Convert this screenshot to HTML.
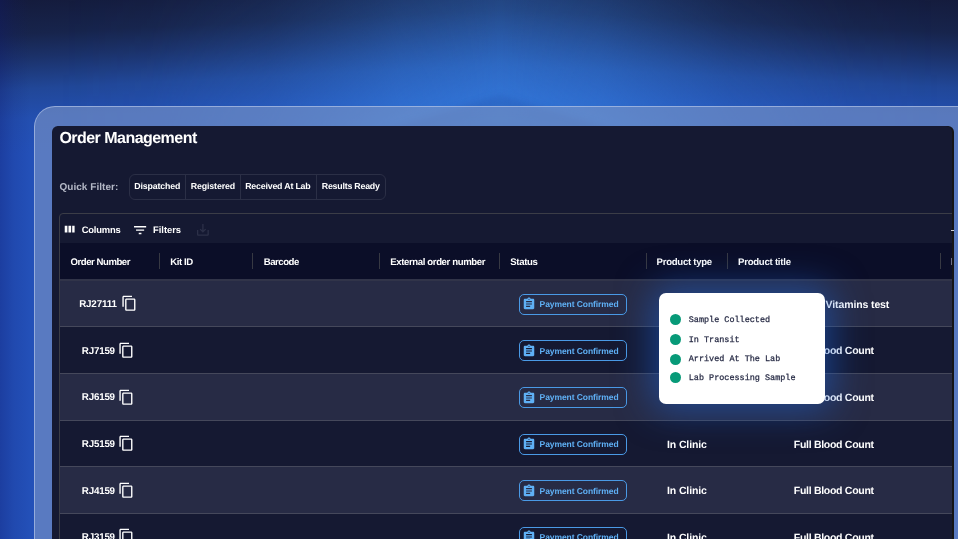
<!DOCTYPE html>
<html lang="en"><head><meta charset="utf-8"><title>Order Management</title>
<style>
*{margin:0;padding:0;box-sizing:border-box}
html,body{width:958px;height:539px;overflow:hidden;background:#2450b8}
body{position:relative;font-family:"Liberation Sans",sans-serif;font-weight:bold;text-rendering:geometricPrecision}
.bg{position:absolute;left:0;top:0;width:958px;height:539px;overflow:hidden;background:#2350b8}
.bg i{position:absolute;top:0;width:500px;height:600px}
.bg .l{left:0;background:linear-gradient(177.1deg,#141b3c 0px,#17244c 35px,#1b3169 58px,#214798 90px,#234fb0 120px,#2350b8 155px,#2350b8 700px)}
.bg .r{left:500px;background:linear-gradient(182.9deg,#141b3c 0px,#17244c 35px,#1b3169 58px,#214798 90px,#234fb0 120px,#2350b8 155px,#2350b8 700px)}
.bg .gl{left:0;background:linear-gradient(174.3deg,rgba(54,126,222,0.22) 0px,rgba(54,126,222,0.4) 50px,rgba(54,126,222,0.56) 100px,rgba(54,126,222,0.78) 148px,rgba(54,126,222,0.95) 168px,rgba(54,126,222,0.85) 260px,rgba(54,126,222,0.5) 600px);-webkit-mask-image:linear-gradient(90deg,rgba(0,0,0,0) 60px,rgba(0,0,0,0.06) 150px,rgba(0,0,0,0.32) 270px,rgba(0,0,0,0.82) 400px,rgba(0,0,0,1) 500px);mask-image:linear-gradient(90deg,rgba(0,0,0,0) 60px,rgba(0,0,0,0.06) 150px,rgba(0,0,0,0.32) 270px,rgba(0,0,0,0.82) 400px,rgba(0,0,0,1) 500px)}
.bg .gr{left:500px;background:linear-gradient(185.7deg,rgba(54,126,222,0.22) 0px,rgba(54,126,222,0.4) 50px,rgba(54,126,222,0.56) 100px,rgba(54,126,222,0.78) 148px,rgba(54,126,222,0.95) 168px,rgba(54,126,222,0.85) 260px,rgba(54,126,222,0.5) 600px);-webkit-mask-image:linear-gradient(270deg,rgba(0,0,0,0) 60px,rgba(0,0,0,0.06) 150px,rgba(0,0,0,0.32) 270px,rgba(0,0,0,0.82) 400px,rgba(0,0,0,1) 500px);mask-image:linear-gradient(270deg,rgba(0,0,0,0) 60px,rgba(0,0,0,0.06) 150px,rgba(0,0,0,0.32) 270px,rgba(0,0,0,0.82) 400px,rgba(0,0,0,1) 500px)}
.bg .e{left:0;width:40px;background:linear-gradient(90deg,rgba(14,24,110,0.32) 0,rgba(14,24,110,0.12) 14px,rgba(14,24,110,0) 30px)}
.bg .w{left:380px;top:95px;width:240px;height:36px;filter:blur(3px)}
.bg .w b{position:absolute;left:0;top:0;width:240px;height:36px;background:linear-gradient(180deg,rgba(22,48,130,0.14),rgba(22,48,130,0.24));clip-path:polygon(50% 0,100% 100%,0 100%)}
.frame{position:absolute;left:34px;top:106px;width:960px;height:500px;border-radius:21px;
 background:rgba(125,150,198,0.6);border:1px solid rgba(190,205,238,0.6)}
.panel{position:absolute;left:52px;top:126px;width:900px;height:440px;background:#151932;border-radius:6px;overflow:hidden;
 box-shadow:2px 0 0 0 #141416}
.in{will-change:transform;position:absolute;left:-52px;top:-126px;width:958px;height:539px}
.in>*{position:absolute}
.qf{left:128.8px;top:173.5px;width:257.2px;height:26.2px;border:1px solid #2b2f46;border-radius:6px}
.qf i{position:absolute;top:0;width:1px;height:24.2px;background:#2b2f46}
.table{left:59.3px;top:213px;width:900px;height:400px;border:1px solid #3b3d47;border-radius:4px 0 0 0;overflow:hidden}
.table>*{position:absolute;left:0;width:900px}
.toolbar{top:0;height:30px}
.thead{top:29px;height:38px;background:#0b0e28;border-bottom:2px solid #313449}
.row{height:46.6px;border-bottom:1px solid #45485b}
.row.odd{background:#272b45}
.sep{width:1px;height:16px;top:252.8px;background:#373943}
.ic{display:block}
.badge{left:518.8px;width:108px;height:21px;border:1px solid #4a9ae6;border-radius:5px}
.t{white-space:nowrap;line-height:1;font-weight:bold}
.card{position:absolute;left:659.2px;top:293px;width:165.4px;height:110.8px;background:#fff;border-radius:7px;
 box-shadow:0 0 36px 6px rgba(30,98,210,0.55)}
.card>*{position:absolute}
.dot{left:10.9px;width:11px;height:11px;border-radius:50%;background:#079a78}
.m{left:29.6px;font-family:"Liberation Mono",monospace;font-weight:normal;font-size:8.47px;line-height:10px;color:#272b45;white-space:nowrap;-webkit-text-stroke:0.25px #272b45}
.tick{position:absolute;left:951.4px;top:229.7px;width:2.2px;height:1.2px;background:#cfcfd4}
.clipmark{left:950.9px;top:258px;width:1.1px;height:7px;background:#6e7088}

</style></head>
<body>
<div class="bg"><i class="l"></i><i class="r"></i><i class="gl"></i><i class="gr"></i><i class="e"></i><i class="w"><b></b></i></div>
<div class="frame"></div>
<div class="panel"><div class="in">
<div class="qf"><i style="left:55.3px"></i><i style="left:110.1px"></i><i style="left:186.4px"></i></div>
<div class="table"><div class="toolbar"></div><div class="thead"></div>
<div class="row odd" style="top:66.8px"></div>
<div class="row" style="top:113.4px"></div>
<div class="row odd" style="top:160px"></div>
<div class="row" style="top:206.6px"></div>
<div class="row odd" style="top:253.2px"></div>
<div class="row" style="top:299.8px"></div>
</div>
<b class="sep" style="left:158.5px"></b><b class="sep" style="left:252.3px"></b><b class="sep" style="left:378.7px"></b><b class="sep" style="left:498.9px"></b><b class="sep" style="left:645.7px"></b><b class="sep" style="left:726.8px"></b><b class="sep" style="left:939.5px"></b>
<b class="clipmark"></b>
<svg class="ic" style="left:59.4px;top:221.4px;width:16px;height:16px" viewBox="0 0 24 24"><path fill="#fff" d="M8.6 7h4v10.2h-4zM14.2 7h4v10.2h-4zM19.8 7h3.6v10.2h-3.6z"/></svg>
<svg class="ic" style="left:131.7px;top:221.5px;width:16.2px;height:16.2px" viewBox="0 0 24 24"><path fill="#fff" d="M10 18h4v-2h-4v2zM3 6v2h18V6H3zm3 7h12v-2H6v2z"/></svg>
<svg class="ic" style="left:195px;top:221.7px;width:15.8px;height:15.8px" viewBox="0 0 24 24"><path fill="#2c3048" d="M19 12v7H5v-7H3v7c0 1.100.9 2 2 2h14c1.100 0 2-.9 2-2v-7h-2zm-6 .67l2.590-2.580L17 11.500l-5 5-5-5 1.410-1.410L11 12.670V3h2z"/></svg>
<svg class="ic" style="left:120.7px;top:295.3px;width:16.5px;height:16.5px" viewBox="0 0 24 24"><path fill="#fff" d="M16 1H4c-1.100 0-2 .9-2 2v14h2V3h12V1zm3 4H8c-1.100 0-2 .9-2 2v14c0 1.100.9 2 2 2h11c1.100 0 2-.9 2-2V7c0-1.100-.9-2-2-2zm0 16H8V7h11v14z"/></svg>
<div class="badge" style="top:293.7px"></div><svg class="ic" style="left:522.2px;top:297.3px;width:14px;height:14px" viewBox="0 0 24 24"><path fill="#5fb0f5" d="M19 3h-4.180C14.400 1.840 13.300 1 12 1c-1.300 0-2.400.84-2.820 2H5c-1.100 0-2 .9-2 2v14c0 1.100.9 2 2 2h14c1.100 0 2-.9 2-2V5c0-1.100-.9-2-2-2zm-7 0c.55 0 1 .45 1 1s-.45 1-1 1-1-.45-1-1 .45-1 1-1zm2 14H7v-2h7v2zm3-4H7v-2h10v2zm0-4H7V7h10v2z"/></svg>
<svg class="ic" style="left:118.3px;top:341.9px;width:16.5px;height:16.5px" viewBox="0 0 24 24"><path fill="#fff" d="M16 1H4c-1.100 0-2 .9-2 2v14h2V3h12V1zm3 4H8c-1.100 0-2 .9-2 2v14c0 1.100.9 2 2 2h11c1.100 0 2-.9 2-2V7c0-1.100-.9-2-2-2zm0 16H8V7h11v14z"/></svg>
<div class="badge" style="top:340.3px"></div><svg class="ic" style="left:522.2px;top:343.9px;width:14px;height:14px" viewBox="0 0 24 24"><path fill="#5fb0f5" d="M19 3h-4.180C14.400 1.840 13.300 1 12 1c-1.300 0-2.400.84-2.820 2H5c-1.100 0-2 .9-2 2v14c0 1.100.9 2 2 2h14c1.100 0 2-.9 2-2V5c0-1.100-.9-2-2-2zm-7 0c.55 0 1 .45 1 1s-.45 1-1 1-1-.45-1-1 .45-1 1-1zm2 14H7v-2h7v2zm3-4H7v-2h10v2zm0-4H7V7h10v2z"/></svg>
<svg class="ic" style="left:118.3px;top:388.5px;width:16.5px;height:16.5px" viewBox="0 0 24 24"><path fill="#fff" d="M16 1H4c-1.100 0-2 .9-2 2v14h2V3h12V1zm3 4H8c-1.100 0-2 .9-2 2v14c0 1.100.9 2 2 2h11c1.100 0 2-.9 2-2V7c0-1.100-.9-2-2-2zm0 16H8V7h11v14z"/></svg>
<div class="badge" style="top:386.9px"></div><svg class="ic" style="left:522.2px;top:390.5px;width:14px;height:14px" viewBox="0 0 24 24"><path fill="#5fb0f5" d="M19 3h-4.180C14.400 1.840 13.300 1 12 1c-1.300 0-2.400.84-2.820 2H5c-1.100 0-2 .9-2 2v14c0 1.100.9 2 2 2h14c1.100 0 2-.9 2-2V5c0-1.100-.9-2-2-2zm-7 0c.55 0 1 .45 1 1s-.45 1-1 1-1-.45-1-1 .45-1 1-1zm2 14H7v-2h7v2zm3-4H7v-2h10v2zm0-4H7V7h10v2z"/></svg>
<svg class="ic" style="left:118.3px;top:435.1px;width:16.5px;height:16.5px" viewBox="0 0 24 24"><path fill="#fff" d="M16 1H4c-1.100 0-2 .9-2 2v14h2V3h12V1zm3 4H8c-1.100 0-2 .9-2 2v14c0 1.100.9 2 2 2h11c1.100 0 2-.9 2-2V7c0-1.100-.9-2-2-2zm0 16H8V7h11v14z"/></svg>
<div class="badge" style="top:433.5px"></div><svg class="ic" style="left:522.2px;top:437.1px;width:14px;height:14px" viewBox="0 0 24 24"><path fill="#5fb0f5" d="M19 3h-4.180C14.400 1.840 13.300 1 12 1c-1.300 0-2.400.84-2.820 2H5c-1.100 0-2 .9-2 2v14c0 1.100.9 2 2 2h14c1.100 0 2-.9 2-2V5c0-1.100-.9-2-2-2zm-7 0c.55 0 1 .45 1 1s-.45 1-1 1-1-.45-1-1 .45-1 1-1zm2 14H7v-2h7v2zm3-4H7v-2h10v2zm0-4H7V7h10v2z"/></svg>
<svg class="ic" style="left:118.3px;top:481.7px;width:16.5px;height:16.5px" viewBox="0 0 24 24"><path fill="#fff" d="M16 1H4c-1.100 0-2 .9-2 2v14h2V3h12V1zm3 4H8c-1.100 0-2 .9-2 2v14c0 1.100.9 2 2 2h11c1.100 0 2-.9 2-2V7c0-1.100-.9-2-2-2zm0 16H8V7h11v14z"/></svg>
<div class="badge" style="top:480.1px"></div><svg class="ic" style="left:522.2px;top:483.7px;width:14px;height:14px" viewBox="0 0 24 24"><path fill="#5fb0f5" d="M19 3h-4.180C14.400 1.840 13.300 1 12 1c-1.300 0-2.400.84-2.820 2H5c-1.100 0-2 .9-2 2v14c0 1.100.9 2 2 2h14c1.100 0 2-.9 2-2V5c0-1.100-.9-2-2-2zm-7 0c.55 0 1 .45 1 1s-.45 1-1 1-1-.45-1-1 .45-1 1-1zm2 14H7v-2h7v2zm3-4H7v-2h10v2zm0-4H7V7h10v2z"/></svg>
<svg class="ic" style="left:118.3px;top:528.3px;width:16.5px;height:16.5px" viewBox="0 0 24 24"><path fill="#fff" d="M16 1H4c-1.100 0-2 .9-2 2v14h2V3h12V1zm3 4H8c-1.100 0-2 .9-2 2v14c0 1.100.9 2 2 2h11c1.100 0 2-.9 2-2V7c0-1.100-.9-2-2-2zm0 16H8V7h11v14z"/></svg>
<div class="badge" style="top:526.7px"></div><svg class="ic" style="left:522.2px;top:530.3px;width:14px;height:14px" viewBox="0 0 24 24"><path fill="#5fb0f5" d="M19 3h-4.180C14.400 1.840 13.300 1 12 1c-1.300 0-2.400.84-2.820 2H5c-1.100 0-2 .9-2 2v14c0 1.100.9 2 2 2h14c1.100 0 2-.9 2-2V5c0-1.100-.9-2-2-2zm-7 0c.55 0 1 .45 1 1s-.45 1-1 1-1-.45-1-1 .45-1 1-1zm2 14H7v-2h7v2zm3-4H7v-2h10v2zm0-4H7V7h10v2z"/></svg>
<span class="t" style="left:59.4px;top:130px;font-size:16px;letter-spacing:-0.53px;color:#ffffff;line-height:17px;">Order Management</span>
<span class="t" style="left:59.4px;top:182px;font-size:10px;letter-spacing:0.05px;color:#b4b8c6;line-height:11px;">Quick Filter:</span>
<span class="t" style="left:134.3px;top:181px;font-size:8.8px;letter-spacing:-0.16px;color:#ffffff;line-height:10px;">Dispatched</span>
<span class="t" style="left:190.8px;top:181px;font-size:8.8px;letter-spacing:-0.13px;color:#ffffff;line-height:10px;">Registered</span>
<span class="t" style="left:245.2px;top:181px;font-size:8.8px;letter-spacing:-0.19px;color:#ffffff;line-height:10px;">Received At Lab</span>
<span class="t" style="left:321.8px;top:181px;font-size:8.8px;letter-spacing:-0.21px;color:#ffffff;line-height:10px;">Results Ready</span>
<span class="t" style="left:81.8px;top:224px;font-size:9.4px;letter-spacing:-0.21px;color:#ffffff;line-height:11px;">Columns</span>
<span class="t" style="left:153px;top:224px;font-size:9.4px;letter-spacing:-0.02px;color:#ffffff;line-height:11px;">Filters</span>
<span class="t" style="left:70.5px;top:257px;font-size:9.6px;letter-spacing:-0.46px;color:#ffffff;line-height:11px;">Order Number</span>
<span class="t" style="left:170.2px;top:257px;font-size:9.6px;letter-spacing:-0.4px;color:#ffffff;line-height:11px;">Kit ID</span>
<span class="t" style="left:263.7px;top:257px;font-size:9.6px;letter-spacing:-0.46px;color:#ffffff;line-height:11px;">Barcode</span>
<span class="t" style="left:390.2px;top:257px;font-size:9.6px;letter-spacing:-0.38px;color:#ffffff;line-height:11px;">External order number</span>
<span class="t" style="left:510.2px;top:257px;font-size:9.6px;letter-spacing:-0.32px;color:#ffffff;line-height:11px;">Status</span>
<span class="t" style="left:656.6px;top:257px;font-size:9.6px;letter-spacing:-0.28px;color:#ffffff;line-height:11px;">Product type</span>
<span class="t" style="left:738px;top:257px;font-size:9.6px;letter-spacing:-0.25px;color:#ffffff;line-height:11px;">Product title</span>
<span class="t" style="left:79.2px;top:299px;font-size:9.8px;letter-spacing:-0.17px;color:#ffffff;line-height:11px;">RJ27111</span>
<span class="t" style="left:539.6px;top:299px;font-size:8.5px;letter-spacing:-0.08px;color:#5fb0f5;line-height:10px;">Payment Confirmed</span>
<span class="t" style="left:825.6px;top:299px;font-size:10.5px;letter-spacing:-0.12px;color:#ffffff;line-height:12px;">Vitamins test</span>
<span class="t" style="left:81.8px;top:346px;font-size:9.8px;letter-spacing:-0.21px;color:#ffffff;line-height:11px;">RJ7159</span>
<span class="t" style="left:539.6px;top:346px;font-size:8.5px;letter-spacing:-0.08px;color:#5fb0f5;line-height:10px;">Payment Confirmed</span>
<span class="t" style="left:667px;top:345px;font-size:10.5px;letter-spacing:-0.12px;color:#ffffff;line-height:12px;">In Clinic</span>
<span class="t" style="left:793.8px;top:345px;font-size:10.5px;letter-spacing:-0.29px;color:#ffffff;line-height:12px;">Full Blood Count</span>
<span class="t" style="left:81.8px;top:392px;font-size:9.8px;letter-spacing:-0.21px;color:#ffffff;line-height:11px;">RJ6159</span>
<span class="t" style="left:539.6px;top:392px;font-size:8.5px;letter-spacing:-0.08px;color:#5fb0f5;line-height:10px;">Payment Confirmed</span>
<span class="t" style="left:667px;top:392px;font-size:10.5px;letter-spacing:-0.12px;color:#ffffff;line-height:12px;">In Clinic</span>
<span class="t" style="left:793.8px;top:392px;font-size:10.5px;letter-spacing:-0.29px;color:#ffffff;line-height:12px;">Full Blood Count</span>
<span class="t" style="left:81.8px;top:439px;font-size:9.8px;letter-spacing:-0.21px;color:#ffffff;line-height:11px;">RJ5159</span>
<span class="t" style="left:539.6px;top:439px;font-size:8.5px;letter-spacing:-0.08px;color:#5fb0f5;line-height:10px;">Payment Confirmed</span>
<span class="t" style="left:667px;top:439px;font-size:10.5px;letter-spacing:-0.12px;color:#ffffff;line-height:12px;">In Clinic</span>
<span class="t" style="left:793.8px;top:439px;font-size:10.5px;letter-spacing:-0.29px;color:#ffffff;line-height:12px;">Full Blood Count</span>
<span class="t" style="left:81.8px;top:486px;font-size:9.8px;letter-spacing:-0.21px;color:#ffffff;line-height:11px;">RJ4159</span>
<span class="t" style="left:539.6px;top:486px;font-size:8.5px;letter-spacing:-0.08px;color:#5fb0f5;line-height:10px;">Payment Confirmed</span>
<span class="t" style="left:667px;top:485px;font-size:10.5px;letter-spacing:-0.12px;color:#ffffff;line-height:12px;">In Clinic</span>
<span class="t" style="left:793.8px;top:485px;font-size:10.5px;letter-spacing:-0.29px;color:#ffffff;line-height:12px;">Full Blood Count</span>
<span class="t" style="left:81.8px;top:532px;font-size:9.8px;letter-spacing:-0.21px;color:#ffffff;line-height:11px;">RJ3159</span>
<span class="t" style="left:539.6px;top:532px;font-size:8.5px;letter-spacing:-0.08px;color:#5fb0f5;line-height:10px;">Payment Confirmed</span>
<span class="t" style="left:667px;top:532px;font-size:10.5px;letter-spacing:-0.12px;color:#ffffff;line-height:12px;">In Clinic</span>
<span class="t" style="left:793.8px;top:532px;font-size:10.5px;letter-spacing:-0.29px;color:#ffffff;line-height:12px;">Full Blood Count</span>
</div></div>
<i class="tick"></i>
<div class="card"><i class="dot" style="top:20.75px"></i><span class="m" style="top:22.2px">Sample Collected</span><i class="dot" style="top:40.75px"></i><span class="m" style="top:42.2px">In Transit</span><i class="dot" style="top:60.75px"></i><span class="m" style="top:60.9px">Arrived At The Lab</span><i class="dot" style="top:79px"></i><span class="m" style="top:79.8px">Lab Processing Sample</span></div>
</body></html>
